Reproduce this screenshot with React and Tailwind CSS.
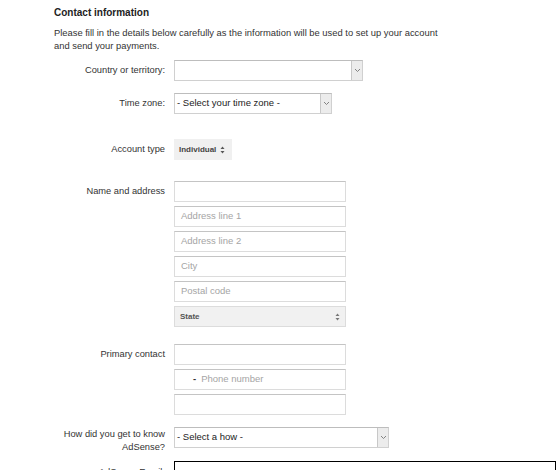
import React from 'react';

const FONT = { fontFamily: '"Liberation Sans", Arial, sans-serif' };

function Chevron() {
  return (
    <svg width="7" height="5" viewBox="0 0 7 5" className="text-[#777]">
      <path d="M1 1l2.5 2.5L6 1" fill="none" stroke="currentColor" strokeWidth="0.9" />
    </svg>
  );
}

function UpDown({ color = '#555' }) {
  return (
    <svg width="5" height="8" viewBox="0 0 5 8">
      <path d="M2.5 0.5L4.5 3H0.5z" fill={color} />
      <path d="M2.5 7.5L4.5 5H0.5z" fill={color} />
    </svg>
  );
}

function Label({ children, className = '' }) {
  return (
    <div className={`w-[112px] shrink-0 pr-[9px] text-right text-[9.3px] leading-[13px] text-[#333] ${className}`}>
      {children}
    </div>
  );
}

function Select({ width, value }) {
  return (
    <div className={`${width} h-[21px] flex border border-[#d0d0d0] border-t-[#bdbdbd] bg-white`}>
      <div className="flex-1 flex items-center pl-[2px] text-[9.5px] text-[#222]">{value}</div>
      <div className="w-[11px] flex items-center justify-center bg-[#ececec] border-l border-[#c8c8c8]">
        <Chevron />
      </div>
    </div>
  );
}

function Input({ placeholder, children }) {
  return (
    <div className="w-[172px] h-[21px] flex items-center px-[6px] border border-[#dcdcdc] border-t-[#c4c4c4] bg-white text-[9.5px] text-[#a5a5a5]">
      {children || placeholder}
    </div>
  );
}

export default function App() {
  return (
    <div className="w-[556px] h-[470px] overflow-hidden bg-white" style={FONT}>
      <div className="pl-[54px] pt-[6px]">
        <h2 className="text-[10px] font-bold leading-[14px] text-[#222]">Contact information</h2>
        <p className="mt-[6px] w-[400px] text-[9.4px] leading-[13px] text-[#333]">
          Please fill in the details below carefully as the information will be used to set up your account and send your payments.
        </p>
      </div>

      <div className="pl-[62px] flex flex-col">
        {/* Country */}
        <div className="mt-[8px] flex items-center">
          <Label>Country or territory:</Label>
          <Select width="w-[189px]" value="" />
        </div>

        {/* Time zone */}
        <div className="mt-[12px] flex items-center">
          <Label>Time zone:</Label>
          <Select width="w-[158px]" value="- Select your time zone -" />
        </div>

        {/* Account type */}
        <div className="mt-[25px] flex items-center">
          <Label>Account type</Label>
          <div className="h-[21px] w-[58px] flex items-center gap-[4px] pl-[5px] bg-[#f0f0f0] text-[8px] font-bold text-[#444]">
            Individual
            <UpDown />
          </div>
        </div>

        {/* Name and address */}
        <div className="mt-[21px] flex items-start">
          <Label className="pt-[4px]">Name and address</Label>
          <div className="flex flex-col gap-[4px]">
            <Input />
            <Input placeholder="Address line 1" />
            <Input placeholder="Address line 2" />
            <Input placeholder="City" />
            <Input placeholder="Postal code" />
            <div className="w-[172px] h-[21px] flex items-center justify-between px-[5px] border border-[#dcdcdc] bg-[#f1f1f1] text-[8px] font-bold text-[#555]">
              State
              <UpDown color="#777" />
            </div>
          </div>
        </div>

        {/* Primary contact */}
        <div className="mt-[17px] flex items-start">
          <Label className="pt-[4px]">Primary contact</Label>
          <div className="flex flex-col gap-[4px]">
            <Input />
            <Input>
              <span className="pl-[12px] pr-[5px] font-bold text-[#333]">-</span>
              Phone number
            </Input>
            <Input />
          </div>
        </div>

        {/* How did you */}
        <div className="mt-[12px] flex items-start">
          <Label className="pt-[1px]">
            How did you get to know
            <br />
            AdSense?
          </Label>
          <Select width="w-[215px]" value="- Select a how -" />
        </div>

        {/* Email */}
        <div className="mt-[7px] flex items-start">
          <Label className="pt-[5px]">AdSense Email:</Label>
          <div className="w-[400px] h-[21px] border border-black bg-white" />
        </div>
      </div>
    </div>
  );
}
